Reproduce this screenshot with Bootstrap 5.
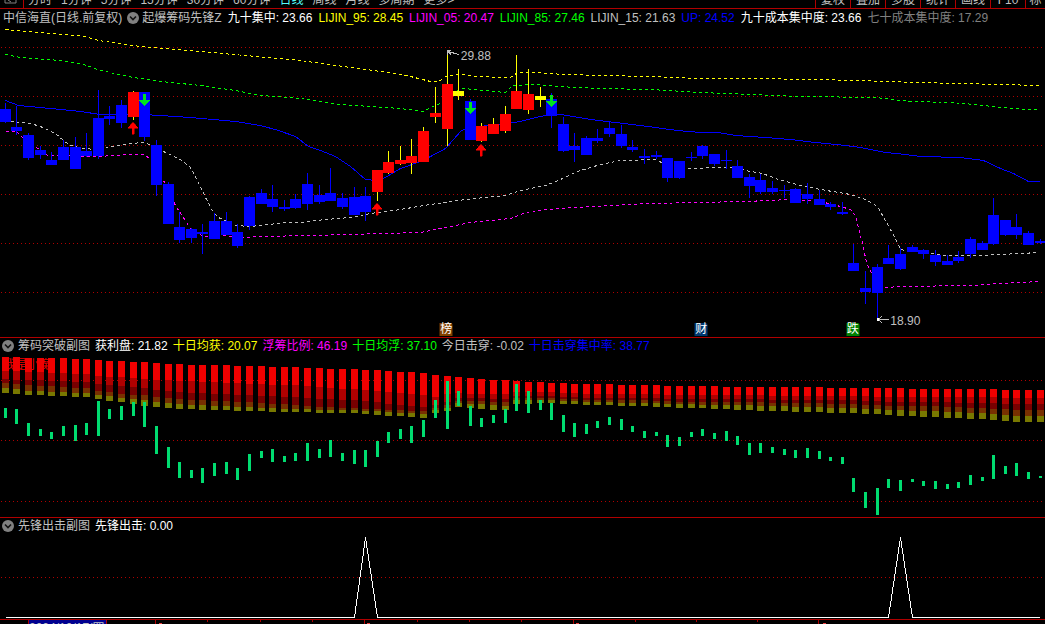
<!DOCTYPE html>
<html lang="zh-CN">
<head>
<meta charset="utf-8">
<meta name="viewport" content="width=device-width, initial-scale=1">
<title>中信海直 日线</title>
<link href="https://cdn.jsdelivr.net/npm/bootstrap@5.3.0/dist/css/bootstrap.min.css" rel="stylesheet">
<style>
  body { background: #000; color: #c0c0c0; font-family: "Liberation Sans", "Noto Sans CJK SC", sans-serif; font-size: 12px; line-height: 18px; }
  .terminal { display: grid; height: 100vh; min-height: 480px; grid-template-rows: 9px minmax(0, 329fr) minmax(0, 180fr) minmax(0, 102fr) 4px; }
  .rule { border-bottom: 1px solid #b00000; }
  .tool-strip { height: 9px; }
  .tool-strip button, .fold { background: none; border: 0; padding: 0; color: inherit; font-size: 12px; }
  .tool-strip button { line-height: 16px; white-space: nowrap; }
  .periods { gap: 9px; }
  .periods .mark-icon { width: 24px; height: 8px; padding-left: 4px; border-right: 1px solid #b00000; margin-right: -5px; }
  .periods .active { color: #54fcfc; }
  .actions button { width: 35px; border-left: 1px solid #b00000; text-align: center; }
  .actions button:last-child { width: 20px; overflow: hidden; }
  .readout { height: 18px; gap: 5px; white-space: nowrap; overflow: hidden; padding-left: 3px; }
  .main-chart .readout { gap: 6px; }
  .sub .readout { padding-left: 2px; padding-bottom: 2px; }
  .fold { width: 12px; height: 12px; display: flex; }
  .sub .fold { margin-right: -1px; }
  .main-chart .fold { margin: 0 -3px 0 -1px; }
  .plot { min-height: 0; }
  .plot svg { display: block; width: 100%; height: 100%; shape-rendering: crispEdges; }
  .tag, .price, .sign { position: absolute; line-height: 13px; }
  .tag { width: 13px; height: 13px; color: #fff; text-align: center; transform: translateX(-50%); border-top-right-radius: 2px; }
  .sign { color: #f00000; }
  .w { color: #fff; } .y { color: #ff0; } .m { color: #f0f; } .g { color: #0f0; } .b { color: #00f; } .d { color: #808080; }
  .axis { height: 4px; }
  .axis-date { background: #000090; border-left: 1px solid #b00000; width: 78px; line-height: 16px; height: 16px; }
  .axis-kind { width: 28px; padding-left: 6px; color: #f04040; }
  .axis-ticks { position: absolute; inset: 0; width: 100%; height: 4px; }
</style>
<script src="https://cdn.jsdelivr.net/npm/bootstrap@5.3.0/dist/js/bootstrap.bundle.min.js"></script>
</head>
<body class="m-0 overflow-hidden">
<svg class="d-none">
  <symbol id="chev" viewBox="0 0 12 12"><circle cx="6" cy="6" r="6" fill="#808080"/><path d="M3 4.5 6 7.5 9 4.5" fill="none" stroke="#111" stroke-width="1.6"/></symbol>
</svg>
<main class="terminal">
  <nav class="tool-strip rule d-flex justify-content-between align-items-end overflow-hidden">
    <div class="periods d-flex align-items-end">
      <span class="mark-icon"><svg width="14" height="5" class="d-block"><path d="M1 0V3H12V0M4 0 7 2" fill="none" stroke="#808080" stroke-width="1"/></svg></span>
      <button>分时</button><button>1分钟</button><button>5分钟</button><button>15分钟</button><button>30分钟</button><button>60分钟</button><button class="active">日线</button><button>周线</button><button>月线</button><button>多周期</button><button>更多&gt;</button>
    </div>
    <div class="actions d-flex align-items-end">
      <button>复权</button><button>叠加</button><button>多股</button><button>统计</button><button>画线</button><button>F10</button><button>标</button>
    </div>
  </nav>

  <section class="main-chart rule d-flex flex-column">
    <header class="readout d-flex align-items-center">
      <span>中信海直(日线.前复权)</span>
      <button class="fold" aria-label="收起"><svg width="12" height="12"><use href="#chev"/></svg></button>
      <span>起爆筹码先锋Z</span>
      <span class="w">九十集中: 23.66</span><span class="y">LIJIN_95: 28.45</span><span class="m">LIJIN_05: 20.47</span><span class="g">LIJIN_85: 27.46</span><span>LIJIN_15: 21.63</span><span class="b">UP: 24.52</span><span class="w">九十成本集中度: 23.66</span><span class="d">七十成本集中度: 17.29</span>
    </header>
    <div class="plot position-relative flex-grow-1">
      <svg id="price" viewBox="0 27 1045 310" preserveAspectRatio="none"></svg>
      <span class="price" style="left:44.1%;top:7.3%">29.88</span>
      <span class="price" style="left:85.2%;top:93%">18.90</span>
      <span class="tag" style="left:42.7%;top:95.5%;background:#804000">榜</span>
      <span class="tag" style="left:67.1%;top:95.5%;background:#003870">财</span>
      <span class="tag" style="left:81.6%;top:95.5%;background:#008000">跌</span>
    </div>
  </section>

  <section class="sub rule d-flex flex-column">
    <header class="readout d-flex align-items-center">
      <button class="fold" aria-label="收起"><svg width="12" height="12"><use href="#chev"/></svg></button>
      <span>筹码突破副图</span><span class="w">获利盘: 21.82</span><span class="y">十日均获: 20.07</span><span class="m">浮筹比例: 46.19</span><span class="g">十日均浮: 37.10</span><span>今日击穿: -0.02</span><span class="b">十日击穿集中率: 38.77</span>
    </header>
    <div class="plot position-relative flex-grow-1">
      <svg id="chips" viewBox="0 356 1045 161" preserveAspectRatio="none"></svg>
      <span class="sign" style="left:.3%;top:1.9%">我是小魔</span>
    </div>
  </section>

  <section class="sub rule d-flex flex-column">
    <header class="readout d-flex align-items-center">
      <button class="fold" aria-label="收起"><svg width="12" height="12"><use href="#chev"/></svg></button>
      <span>先锋出击副图</span><span class="w">先锋出击: 0.00</span>
    </header>
    <div class="plot flex-grow-1">
      <svg id="signal" viewBox="0 536 1045 83" preserveAspectRatio="none"></svg>
    </div>
  </section>

  <footer class="axis position-relative d-flex overflow-hidden">
    <span class="axis-kind">000</span><span class="axis-date">2024/10/17/四</span>
    <svg class="axis-ticks" id="ticks" viewBox="0 0 1045 4" preserveAspectRatio="none" shape-rendering="crispEdges"></svg>
  </footer>
</main>
<script>
// centre, high, body top, body bottom, low
const candles = `5 103 109 122 123|16 106 127 131 135|28 133 135 158 160|40 146 150 155 159|51 152 160 165 165|63 140 147 160 160|75 137 147 169 169|86 133 151 156 157|98 90 118 156 159|109 106 116 119 125
121 100 105 123 128|133 91 92 117 120 r|144 92 92 137 141|156 140 145 185 196|168 182 184 224 224|179 212 227 240 243|191 228 229 238 243|202 224 232 234 254|214 213 221 239 239|226 212 221 235 235
237 224 232 246 248|249 196 197 226 230|261 189 193 204 204|272 185 199 207 212|284 200 207 209 211|295 194 199 208 209|307 173 184 204 210|319 185 195 202 204|330 168 193 201 201|342 193 198 207 209
354 187 197 215 215|365 187 196 212 221|377 170 170 192 201 r|388 151 162 173 174 r|400 146 160 164 165 r|411 139 156 163 174 r|423 127 131 162 162 r|435 87 113 117 123 r|447 50 84 129 146 r|458 69 91 96 100 y
470 99 101 140 140|481 123 126 141 142 r|493 118 124 134 134 r|505 106 114 131 133 r|516 55 91 109 109 r|528 69 94 110 114 r|540 87 96 100 107 y|551 93 99 116 128|563 117 124 151 152|574 133 146 150 162
586 136 138 155 155|597 129 138 141 143|609 122 128 134 137|621 125 134 146 148|632 140 147 150 152|644 149 156 158 164|656 151 155 157 159|667 158 158 178 182|679 161 161 178 179|691 152 157 158 161
702 145 146 156 159|714 154 154 164 166|726 150 160 161 169|737 160 166 178 178|749 174 177 186 198|760 174 180 192 194|772 181 188 192 194|784 185 190 191 198|795 188 189 203 203|807 183 194 199 204
819 190 199 205 205|830 202 204 207 210|842 202 212 214 215|853 244 263 271 271|865 271 288 292 304|877 264 267 293 318|888 245 258 264 264|900 248 254 269 270|912 245 247 252 252|923 249 250 254 259
935 250 255 262 266|947 255 261 265 265|958 251 257 261 263|970 237 239 254 258|982 241 243 250 250|993 198 215 244 245|1005 220 220 235 236|1016 214 227 235 239|1028 231 233 245 245|1040 239 241 243 244`
  .split(/[|\n]/).map(s => s.trim().split(' '));

const rect = (x, y, w, h, c) => `<rect x="${x}" y="${y}" width="${w}" height="${h}" fill="${c}"/>`;
const line = (pts, c, dash) => `<polyline points="${pts}" fill="none" stroke="${c}" stroke-width="1" transform="translate(.5 .5)"${dash ? ` stroke-dasharray="${dash}"` : ''}/>`;
const grid = ys => ys.map(y => `<path d="M1 ${y + .5}H1045" stroke="#b00000" stroke-width="1" stroke-dasharray="1 3"/>`).join('');

let s = grid([47, 96, 145, 194, 243, 292]);
s += line('5,29 85,36 98,40 140,46 200,51 300,60 350,67 388,72 410,76 430,81 438,81 447,75 460,74 478,76 505,77 510,77 517,72 537,72 563,74 603,75 650,76 700,78 750,78 810,79 860,80 915,82 960,83 1000,84 1039,85', '#ff0', '3 3');
s += line('5,54 20,57 60,60 83,64 100,70 133,77 160,81 200,85 235,90 260,95 275,96 300,98 340,104 400,108 423,111 430,107 440,103 457,90 463,88 505,92 512,85 537,84 557,86 600,88 650,89 700,92 750,94 800,96 875,97 910,101 950,102 975,104 1000,107 1025,109 1039,109', '#0f0', '3 3');
s += line('5,100 18,105 50,108 80,111 100,114 144,114 190,117 235,121 260,125 278,130 295,136 308,146 320,150 335,156 350,166 365,179 375,180 383,178 400,168 420,161 430,156 445,148 460,131 467,127 500,124 520,121 535,117 550,114 560,114 590,119 640,125 677,130 700,132 718,132 735,135 765,137 790,139 815,142 845,145 860,147 885,152 905,154 920,156 960,157 983,160 1000,168 1013,173 1028,181 1039,181', '#00f');
s += line('10,121 30,123 40,126 55,133 63,140 70,145 83,148 95,149 110,146 140,142 147,143 152,146 165,152 180,159 190,167 197,180 205,197 213,212 218,217 235,225 250,226 260,225 285,222 300,222 325,219 350,217 370,213 400,209 430,204 465,199 505,195 520,190 545,185 560,179 577,171 600,164 620,160 655,159 665,164 680,168 700,168 710,167 740,167 745,170 762,173 775,178 800,185 820,189 850,194 865,199 877,206 885,220 895,238 900,249 910,251 925,252 945,255 980,255 1000,254 1039,252', '#c0c0c0', '3 3');
s += line('5,131 16,131 22,137 30,143 40,150 47,155 60,155 98,156 130,154 144,154 150,159 163,180 175,205 190,228 203,236 225,235 240,237 260,236 310,235 350,234 380,233 420,232 440,228 470,222 510,218 525,212 545,209 575,207 610,205 650,203 695,202 745,201 790,199 805,200 820,201 840,206 850,209 855,215 862,243 866,262 872,275 877,290 885,287 900,286 970,285 1000,283 1039,281', '#f0f', '3 3');
const wick = { r: '#ff0', y: '#ff0' }, fill = { r: '#f00', y: '#ff0' };
for (const [x, h, a, b, l, k] of candles)
  s += rect(x, h, 1, l - h, wick[k] || '#00f') + rect(x - 5, a, 11, b - a, fill[k] || '#00f');
for (const [x, y] of [[144, 94], [470, 102], [551, 95]])
  s += `<path d="M${x - 1} ${y}h3v6h4l-5 6h-1l-5-6h4z" fill="#00e020"/>`;
for (const [x, y] of [[133, 122], [377, 203], [481, 144]])
  s += `<path d="M${x} ${y}l5 6h-4v6h-2v-6h-4z" fill="#f00" stroke="#f00" stroke-width=".5"/>`;
s += '<path d="M448 51.500l11 3M447.500 55V50.500H451M448 51l3 4M878 319.500h11M878 319.500l4-3M878 319.500l4 3" fill="none" stroke="#c0c0c0"/>' + rect(877, 318, 2, 3, '#fff');
price.innerHTML = s;

// index of the day, then the six edges of the stacked cost bands
const bands = [[0,357,371,379,383,388,393],[1,357,371,380,384,389,394],[2,358,372,380,385,391,395],[5,358,373,381,387,392,396],[7,359,374,382,388,393,397],[8,360,376,384,391,395,399],[11,362,378,387,395,399,404],[12,362,379,388,395,400,406],[14,364,380,391,398,403,408],[18,365,382,394,401,406,410],[21,366,384,395,402,407,411],[25,367,385,397,405,409,412],[29,369,389,400,408,410,413],[30,369,389,400,408,410,413],[36,373,395,407,411,414,418],[37,375,397,405,408,410,413],[38,376,394,402,405,408,411],[39,377,393,398,401,403,407],[41,379,394,398,401,404,409],[43,380,394,399,402,406,410],[44,381,392,396,398,400,404],[47,383,392,396,398,400,403],[51,384,394,398,400,402,405],[54,385,394,398,400,403,406],[59,386,395,399,402,404,408],[60,386,395,399,402,405,408],[63,387,395,399,402,405,410],[69,387,396,400,403,407,412],[73,388,396,400,404,408,413],[76,388,397,402,406,410,415],[80,389,397,402,406,411,417],[84,389,397,403,408,413,419],[87,390,398,404,410,416,422],[89,390,398,404,410,416,422]];
const tones = ['#f00000', '#b00000', '#780000', '#783000', '#787800'];
s = grid([380, 440, 501]);
candles.forEach(([x, h, , , l], i) => {
  const n = Math.max(1, bands.findIndex(k => k[0] >= i)), p = bands[n - 1], q = bands[n];
  const e = p.map((v, j) => Math.round(v + (q[j] - v) * (i - p[0]) / (q[0] - p[0])));
  tones.forEach((c, j) => s += rect(x - 3, e[j + 1], 7, e[j + 2] - e[j + 1], c));
  const top = Math.round(356 + h / 2), end = Math.round(356 + l / 2);
  s += rect(x - 1, top, 3, end - top, '#00dc70');
});
chips.innerHTML = s;

signal.innerHTML = grid([577]) + line('5,617 354,617 365,537 377,617 888,617 900,537 912,617 1039,617', '#fff');

ticks.innerHTML = [106, 155, 364, 573, 818].map(x => rect(x, 0, 1, 4, '#b00000')).join('') +
  [207, 260, 312, 417, 469, 521, 635, 696, 757].map(x => rect(x, 0, 1, 2, '#b00000')).join('') +
  [159, 367, 576, 823].map(x => rect(x, 3, 3, 1, '#f04040')).join('');
</script>
</body>
</html>
